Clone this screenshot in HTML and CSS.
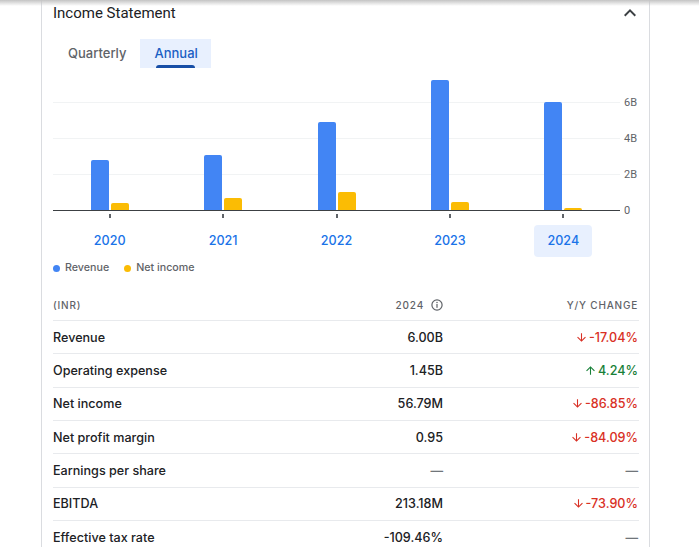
FILE: index.html
```html
<!DOCTYPE html>
<html lang="en">
<head>
<meta charset="utf-8">
<title>Income Statement</title>
<link rel="stylesheet" href="styles.css">
</head>
<body>
<div class="topshade"></div>
<section class="card">
  <header class="card-head">
    <h2 class="title">Income Statement</h2>
    <svg class="chev" width="24" height="24" viewBox="0 0 24 24"><path d="M12 8l-6 6 1.41 1.41L12 10.83l4.59 4.58L18 14z" fill="#3c4043"/></svg>
  </header>
  <div class="tabs">
    <div class="tab">Quarterly</div>
    <div class="tab active">Annual</div>
  </div>
  <div class="chart">
    <div class="plot">
      <div class="group"><div class="bar rev" style="height:50px"></div><div class="bar ni" style="height:7px"></div></div>
      <div class="group"><div class="bar rev" style="height:55px"></div><div class="bar ni" style="height:12px"></div></div>
      <div class="group"><div class="bar rev" style="height:88px"></div><div class="bar ni" style="height:18px"></div></div>
      <div class="group"><div class="bar rev" style="height:130px"></div><div class="bar ni" style="height:8px"></div></div>
      <div class="group"><div class="bar rev" style="height:108px"></div><div class="bar ni" style="height:2px"></div></div>
    </div>
    <div class="yaxis"><span>6B</span><span>4B</span><span>2B</span><span>0</span></div>
  </div>
  <div class="xaxis">
    <div class="xcol"><i class="tick"></i><span class="year">2020</span></div>
    <div class="xcol"><i class="tick"></i><span class="year">2021</span></div>
    <div class="xcol"><i class="tick"></i><span class="year">2022</span></div>
    <div class="xcol"><i class="tick"></i><span class="year">2023</span></div>
    <div class="xcol"><i class="tick"></i><span class="year selected">2024</span></div>
  </div>
  <div class="legend">
    <span class="item"><i class="dot dot-rev"></i>Revenue</span>
    <span class="item"><i class="dot dot-ni"></i>Net income</span>
  </div>
  <div class="table">
    <div class="row head">
      <span>(INR)</span>
      <span class="num">2024<svg class="info" width="12" height="12" viewBox="0 0 12 12"><circle cx="6" cy="6" r="5.1" fill="none" stroke="#5f6368" stroke-width="1.2"/><rect x="5.4" y="5" width="1.2" height="3.8" fill="#5f6368"/><circle cx="6" cy="3.6" r="0.75" fill="#5f6368"/></svg></span>
      <span class="num last">Y/Y CHANGE</span>
    </div>
    <div class="row">
      <span class="label">Revenue</span><span class="num">6.00B</span>
      <span class="num last chg down"><svg class="arr" width="13" height="13" viewBox="0 0 24 24"><path d="M20 12l-1.41-1.41L13 16.17V4h-2v12.17l-5.58-5.59L4 12l8 8 8-8z"/></svg>-17.04%</span>
    </div>
    <div class="row">
      <span class="label">Operating expense</span><span class="num">1.45B</span>
      <span class="num last chg up"><svg class="arr" width="13" height="13" viewBox="0 0 24 24"><path d="M4 12l1.41 1.41L11 7.83V20h2V7.83l5.58 5.59L20 12l-8-8-8 8z"/></svg>4.24%</span>
    </div>
    <div class="row">
      <span class="label">Net income</span><span class="num">56.79M</span>
      <span class="num last chg down"><svg class="arr" width="13" height="13" viewBox="0 0 24 24"><path d="M20 12l-1.41-1.41L13 16.17V4h-2v12.17l-5.58-5.59L4 12l8 8 8-8z"/></svg>-86.85%</span>
    </div>
    <div class="row">
      <span class="label">Net profit margin</span><span class="num">0.95</span>
      <span class="num last chg down"><svg class="arr" width="13" height="13" viewBox="0 0 24 24"><path d="M20 12l-1.41-1.41L13 16.17V4h-2v12.17l-5.58-5.59L4 12l8 8 8-8z"/></svg>-84.09%</span>
    </div>
    <div class="row">
      <span class="label">Earnings per share</span><span class="num dash">—</span>
      <span class="num last dash">—</span>
    </div>
    <div class="row">
      <span class="label">EBITDA</span><span class="num">213.18M</span>
      <span class="num last chg down"><svg class="arr" width="13" height="13" viewBox="0 0 24 24"><path d="M20 12l-1.41-1.41L13 16.17V4h-2v12.17l-5.58-5.59L4 12l8 8 8-8z"/></svg>-73.90%</span>
    </div>
    <div class="row">
      <span class="label">Effective tax rate</span><span class="num">-109.46%</span>
      <span class="num last dash">—</span>
    </div>
  </div>
</section>
</body>
</html>
```

FILE: styles.css
```css
html { overflow: hidden; }
body {
  margin: 0;
  background: #fff;
  font-family: Roboto, "Liberation Sans", Arial, sans-serif;
  color: #202124;
}
.topshade {
  position: fixed;
  top: 0; left: 0; right: 0;
  height: 6px;
  background: linear-gradient(#c4c4c4, rgba(255,255,255,0));
  z-index: 2;
}
.card {
  margin-left: 41px;
  border-left: 1px solid #dadce0;
  border-right: 1px solid #dadce0;
  padding: 1px 10px 0 11px;
  box-sizing: content-box;
  width: 586px;
}
.card-head {
  display: flex;
  align-items: center;
  justify-content: space-between;
  height: 24px;
}
.title {
  margin: 0;
  font-size: 15px;
  font-weight: 400;
  line-height: 20px;
  color: #202124;
}
.chev { margin-right: -3px; display: block; }
.tabs {
  display: flex;
  margin-top: 14px;
  height: 29px;
}
.tab {
  position: relative;
  padding: 0 14px 0 15px;
  line-height: 29px;
  font-family: Inter, Roboto, sans-serif;
  font-size: 13px;
  font-weight: 500;
  color: #5f6368;
}
.tab.active {
  background: #e8f0fe;
  color: #1a5fc4;
  padding: 0 13px 0 14px;
}
.tab.active::after {
  content: "";
  position: absolute;
  left: 16px; right: 16px; bottom: 0;
  height: 3px;
  border-radius: 3px 3px 0 0;
  background: #174ea6;
}
.chart { display: flex; }
.plot {
  width: 567px;
  height: 142px;
  border-bottom: 1px solid #3c4043;
  display: flex;
  background:
    linear-gradient(#f1f3f4, #f1f3f4) 0 34px / 100% 1px no-repeat,
    linear-gradient(#f1f3f4, #f1f3f4) 0 70px / 100% 1px no-repeat,
    linear-gradient(#f1f3f4, #f1f3f4) 0 106px / 100% 1px no-repeat;
}
.group {
  flex: 1;
  display: flex;
  align-items: flex-end;
  justify-content: center;
  gap: 2px;
}
.bar { width: 18px; border-radius: 2px 2px 0 0; }
.rev { background: #4285f4; }
.ni { background: #fbbc04; }
.yaxis {
  height: 143px;
  padding: 17px 0 0 4px;
  box-sizing: border-box;
  display: flex;
  flex-direction: column;
  font-size: 11px;
  color: #5f6368;
}
.yaxis span { height: 36px; line-height: 36px; flex: none; }
.xaxis { display: flex; width: 567px; }
.xcol {
  flex: 1;
  display: flex;
  flex-direction: column;
  align-items: center;
}
.tick {
  display: block;
  width: 2px;
  height: 4px;
  margin-top: 3px;
  background: #5f6368;
}
.year {
  margin-top: 7px;
  height: 32px;
  line-height: 32px;
  padding: 0 13px;
  border-radius: 4px;
  font-family: Inter, Roboto, sans-serif;
  font-size: 12.6px;
  font-weight: 500;
  color: #1a73e8;
}
.year.selected { background: #e8f0fe; }
.legend {
  display: flex;
  gap: 15px;
  margin-top: 3px;
  line-height: 16px;
  font-family: Inter, Roboto, sans-serif;
  font-size: 10.7px;
  font-weight: 500;
  color: #5f6368;
}
.item { display: flex; align-items: center; }
.dot {
  display: block;
  width: 7px;
  height: 7px;
  border-radius: 50%;
  margin-right: 5px;
}
.dot-rev { background: #4285f4; }
.dot-ni { background: #fbbc04; }
.table { margin-top: 14px; }
.row {
  display: grid;
  grid-template-columns: 1fr 150px 196px;
  align-items: center;
  height: 33.33px;
  box-sizing: border-box;
  border-bottom: 1px solid #e8eaed;
  font-family: Inter, Roboto, sans-serif;
  font-size: 12.6px;
  font-weight: 500;
  color: #202124;
}
.row.head {
  height: 31px;
  font-size: 10px;
  font-weight: 500;
  letter-spacing: 0.8px;
  color: #5f6368;
}
.num {
  display: flex;
  align-items: center;
  justify-content: flex-end;
}
.last { padding-right: 1px; }
.info { margin-left: 7px; }
.arr { margin-right: 1px; fill: currentColor; }
.down { color: #d93025; }
.up { color: #188038; }
.dash { color: #70757a; }
.row:last-child { border-bottom: none; }
```
